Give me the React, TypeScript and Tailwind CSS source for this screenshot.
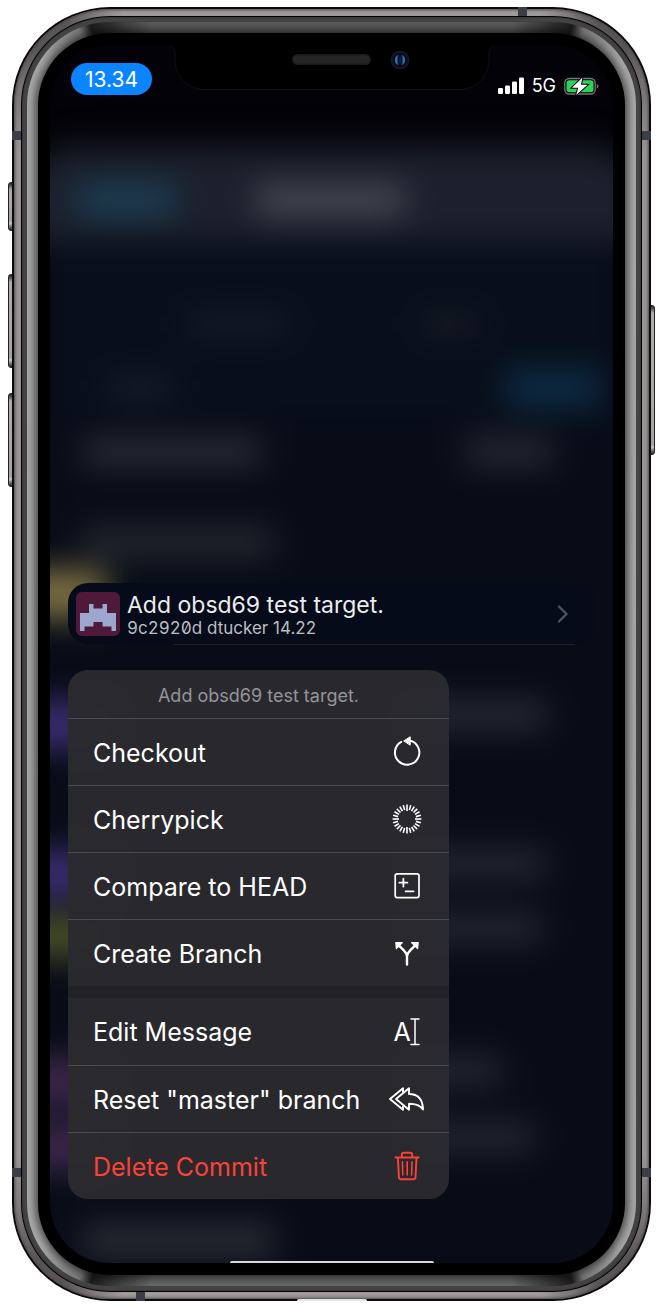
import type { ReactNode } from 'react';

const FONT = "font-['Inter','Liberation_Sans',sans-serif]";

function Icon({ children }: { children: ReactNode }) {
  return (
    <svg
      aria-hidden="true"
      viewBox="0 0 40 40"
      className="size-10 shrink-0"
      fill="none"
      stroke="currentColor"
      strokeWidth="2"
      strokeLinejoin="round"
      strokeLinecap="round"
    >
      {children}
    </svg>
  );
}

function CheckoutIcon() {
  return (
    <Icon>
      <path d="M14.2 9.9A12.2 12.2 0 1 0 22.6 8.6" />
      <path d="M17 8.8 23.2 4.8V12.8Z" fill="currentColor" strokeWidth="1" />
    </Icon>
  );
}

function CherrypickIcon() {
  const ticks = Array.from({ length: 24 }, (_, i) => i);
  return (
    <Icon>
      {ticks.map((i) => (
        <path
          key={i}
          d={i % 6 === 0 ? 'M20 5.6V12' : 'M20 5.6V10.8'}
          strokeWidth="1.6"
          strokeLinecap="butt"
          transform={`rotate(${i * 15} 20 20)`}
        />
      ))}
    </Icon>
  );
}

function CompareIcon() {
  return (
    <Icon>
      <rect x="8.2" y="7.8" width="23.8" height="23.8" rx="2" strokeWidth="1.7" />
      <path d="M12.4 16.7h8M16.4 12.7v8M18.6 25.3h8" strokeWidth="1.8" />
    </Icon>
  );
}

function BranchIcon() {
  return (
    <Icon>
      <path d="M20 31.6V23.5C20 20.5 18.6 19.2 16.6 17.2L10.5 11.2M20 23.5C20 20.5 21.4 19.2 23.4 17.2L29.5 11.2" strokeWidth="2.4" />
      <path d="M8.8 9.6H15.4L9.4 15.6ZM31.2 9.6H24.6L30.6 15.6Z" fill="currentColor" strokeWidth="1.2" />
    </Icon>
  );
}

function RenameIcon() {
  return (
    <Icon>
      <text
        x="6.6"
        y="29"
        fontSize="25"
        fill="currentColor"
        stroke="none"
        className="font-['Inter','Liberation_Sans',sans-serif]"
      >
        A
      </text>
      <path d="M24 7h8M24 32.6h8M28 7v25.6" strokeWidth="1.5" />
    </Icon>
  );
}

function ResetIcon() {
  return (
    <Icon>
      <path d="M9 20 22 9.2V15C30 15 35.8 19.5 36 30.6C33 26 29 24.8 22 24.8V30.8Z" strokeWidth="1.9" />
      <path d="M16 12.5V9.2L3 20 16 30.8V27.5" strokeWidth="1.9" />
    </Icon>
  );
}

function TrashIcon() {
  return (
    <Icon>
      <path d="M8.5 11.5H31.7M14.9 11.2V8.7Q14.9 6.8 16.8 6.8H23.3Q25.2 6.8 25.2 8.7V11.2" strokeWidth="1.9" />
      <path d="M10.9 11.8 11.9 31.3Q12 33.2 13.9 33.2H26.5Q28.4 33.2 28.5 31.3L29.5 11.8" strokeWidth="1.9" />
      <path d="M15.4 15.7 15.8 29M20.2 15.7V29M25 15.7 24.6 29" strokeWidth="1.6" />
    </Icon>
  );
}

type Action = { label: string; icon: ReactNode; danger?: boolean };

const groups: Action[][] = [
  [
    { label: 'Checkout', icon: <CheckoutIcon /> },
    { label: 'Cherrypick', icon: <CherrypickIcon /> },
    { label: 'Compare to HEAD', icon: <CompareIcon /> },
    { label: 'Create Branch', icon: <BranchIcon /> },
  ],
  [
    { label: 'Edit Message', icon: <RenameIcon /> },
    { label: 'Reset "master" branch', icon: <ResetIcon /> },
    { label: 'Delete Commit', icon: <TrashIcon />, danger: true },
  ],
];

function ContextMenu() {
  return (
    <div role="menu" className="w-full max-w-[381px] overflow-hidden rounded-[20px] bg-[#2a2a2e]/97">
      <p className="flex h-12 items-center justify-center pt-[3px] text-[18px] text-[#94949b]">
        Add obsd69 test target.
      </p>
      {groups.map((group, g) => (
        <div key={g} className={g > 0 ? 'border-t-12 border-[#222226]' : ''}>
          {group.map((action, i) => (
            <button
              key={action.label}
              type="button"
              role="menuitem"
              className={`flex h-[67px] w-full items-center justify-between pr-[22px] pl-[25px] text-left text-[25px] ${
                g > 0 && i === 0 ? '' : 'border-t border-[#4a4a50]'
              } ${action.danger ? 'text-[#f8423a]' : 'text-white'}`}
            >
              <span className="pt-[3px]">{action.label}</span>
              {action.icon}
            </button>
          ))}
        </div>
      ))}
    </div>
  );
}

function CommitRow() {
  return (
    <a href="#commit" className="relative flex h-[61px] items-center rounded-[20px] bg-[#050b18] pr-[26px] pl-2">
      <span className="flex size-11 shrink-0 items-center justify-center rounded-md bg-[#4f1a3a]">
        <svg aria-hidden="true" viewBox="0 0 8 6" className="mt-2 h-[27px] w-9" fill="#9ca6cf">
          <path d="M2 0H3V1H5V0H6V2H8V6H7V5H5V4H3V5H1V6H0V2H2Z" />
        </svg>
      </span>
      <span className="ml-[7px] flex grow flex-col pt-1">
        <span className="text-[23px] leading-[26px] text-[#ececee]">Add obsd69 test target.</span>
        <span className="text-[17px] leading-[21px] text-[#bcbec2]">
          <span className="slashed-zero tabular-nums">9c2920d</span> dtucker 14.22
        </span>
      </span>
      <svg aria-hidden="true" viewBox="0 0 12 20" className="h-5 w-3" fill="none" stroke="#50545d" strokeWidth="2.4" strokeLinecap="round" strokeLinejoin="round">
        <path d="M2 2.5 9.5 10 2 17.5" />
      </svg>
      <span className="absolute right-5 -bottom-px left-[105px] h-px bg-[#1b1f26]" />
    </a>
  );
}

function Backdrop() {
  return (
    <div aria-hidden="true" className="absolute inset-0 bg-[#030208]">
      <div className="flex h-full flex-col pt-[100px] blur-[16px]">
        <div className="-mx-8 flex h-[97px] shrink-0 items-center rounded-t-[60px] bg-[#1b202c] px-8 pt-3">
          <span className="ml-6 h-8 w-26 rounded-xl bg-[#1c3f55]" />
          <span className="ml-[76px] h-8 w-38 rounded-xl bg-[#454852]" />
        </div>
        <div className="-mx-8 -mb-8 grow bg-[#070c17] px-8">
          <div className="flex h-[178px] flex-col justify-end bg-[#080e1a]">
            <div className="flex h-16 items-center pl-34">
              <span className="h-6 w-26 bg-[#161d27]" />
              <span className="ml-32 h-6 w-16 bg-[#161b24]" />
            </div>
            <div className="flex h-16 items-center justify-between pr-3 pl-14">
              <span className="h-6 w-17 bg-[#181e28]" />
              <span className="h-10 w-24 bg-[#0c2b44]" />
            </div>
          </div>
          <div className="flex h-16 items-center justify-between pr-15 pl-8">
            <span className="h-7 w-45 bg-[#2b2d37]" />
            <span className="h-7 w-22 bg-[#292a35]" />
          </div>
          <div className="flex h-[74px] items-end pl-8">
            <span className="h-8 w-48 bg-[#22262e]" />
          </div>
          <div className="-ml-8 h-[143px] pt-3">
            <div className="h-12 w-22 bg-[#7d6f40]" />
          </div>
          <div className="-ml-8 flex h-[149px] items-start">
            <span className="h-12 w-24 bg-[#3a2c6e]" />
            <span className="ml-71 h-7 w-37 bg-[#292c36]" />
          </div>
          <div className="-ml-8 flex h-16 items-start">
            <span className="h-12 w-24 bg-[#3a2c6e]" />
            <span className="ml-71 h-7 w-37 bg-[#262933]" />
          </div>
          <div className="-ml-8 flex h-[143px] items-start">
            <span className="h-11 w-24 bg-[#464c26]" />
            <span className="ml-71 h-7 w-36 bg-[#262933]" />
          </div>
          <div className="-ml-8 flex h-[66px] items-start">
            <span className="h-12 w-24 bg-[#3c264a]" />
            <span className="ml-71 h-7 w-26 bg-[#262933]" />
          </div>
          <div className="-ml-8 flex h-[100px] items-start">
            <span className="h-12 w-24 bg-[#3c264a]" />
            <span className="ml-71 h-7 w-34 bg-[#262933]" />
          </div>
          <div className="ml-8 h-9 w-48 bg-[#272a32]" />
        </div>
      </div>
    </div>
  );
}

function Notch() {
  return (
    <svg aria-hidden="true" viewBox="0 0 330 45" className="h-[45px] w-[330px] shrink-0">
      <path
        d="M0 -1C6 0 8 4 8 10V13C8 32 20 44.5 38 44.5H292C310 44.5 322 32 322 13V10C322 4 324 0 330 -1Z"
        fill="#000"
        stroke="#1d1d20"
        strokeWidth="0.6"
      />
      <rect x="125" y="9" width="79" height="11" rx="5.5" fill="#1b1b1c" />
      <rect x="126.5" y="10.5" width="76" height="8" rx="4" fill="#252526" />
      <circle cx="233" cy="15" r="9.5" fill="#14161a" />
      <circle cx="233" cy="15" r="7" fill="#060a16" />
      <path d="M231 10A5.5 5.5 0 0 0 231 20Z" fill="#2d6cb0" />
      <path d="M235 10A5.5 5.5 0 0 1 235 20Z" fill="#2d6cb0" />
      <rect x="230.5" y="10" width="5" height="10" rx="2.5" fill="#0b1738" />
    </svg>
  );
}

function StatusBar() {
  return (
    <div className="grid h-[51px] grid-cols-[1fr_330px_1fr] items-start text-white">
      <span className="flex pt-[18px] pl-[21px]">
        <span className="flex h-8 w-[81px] items-center justify-center rounded-full bg-[#0a84ff] pt-px text-[21px]">
          13.34
        </span>
      </span>
      <Notch />
      <span className="flex items-center justify-end gap-2 pt-[30px] pr-[14px]">
        <svg aria-label="Signal" viewBox="0 0 26 17" className="h-[17px] w-[26px] shrink-0" fill="#fff">
          <rect x="0" y="11" width="5" height="6" rx="1.2" />
          <rect x="7" y="8.5" width="5" height="8.5" rx="1.2" />
          <rect x="14" y="4.5" width="5" height="12.5" rx="1.2" />
          <rect x="21" y="0.5" width="5" height="16.5" rx="1.2" />
        </svg>
        <span className="pt-px text-[18px] leading-5">5G</span>
        <svg aria-label="Battery charging" viewBox="0 0 35 20" className="h-5 w-[35px] shrink-0">
          <rect x="0.8" y="2.5" width="30.4" height="15.5" rx="4.5" fill="none" stroke="#77777c" strokeWidth="1.3" />
          <path d="M32.8 8V12.5Q34.4 12 34.4 10.2T32.8 8Z" fill="#77777c" />
          <rect x="2.5" y="4.2" width="27" height="12.1" rx="2.8" fill="#30d158" />
          <path d="M18.5 1.5 8 11.8H14.3L12.2 18.9 23.5 8.8H16.9Z" fill="#fff" stroke="#06040c" strokeWidth="2" paintOrder="stroke" />
        </svg>
      </span>
    </div>
  );
}

function SideButton({ className }: { className: string }) {
  return (
    <span
      aria-hidden="true"
      className={`absolute w-[7px] border border-[#222] bg-[linear-gradient(#222,#b0adad_7px,#a5a2a2_calc(100%-9px),#ccc_calc(100%-7px),#222)] ${className}`}
    />
  );
}

function Band({ className }: { className: string }) {
  return <span aria-hidden="true" className={`absolute bg-[#3b3f45] ${className}`} />;
}

export default function App() {
  return (
    <main className={`min-h-screen bg-white px-3 py-[7px] antialiased ${FONT}`}>
      <div className="relative">
        <SideButton className="top-[175px] -left-[4px] h-[49px] rounded-l-[3px]" />
        <SideButton className="top-[267px] -left-[4px] h-[94px] rounded-l-[3px]" />
        <SideButton className="top-[386px] -left-[4px] h-[94px] rounded-l-[3px]" />
        <SideButton className="top-[298px] -right-[4px] h-[150px] rounded-r-[3px]" />

        <div className="relative rounded-[98px] bg-[#0c0a0c] p-[2px]">
          <div className="rounded-[96px] bg-[conic-gradient(#a09b9b,#a09b9b_18deg,#5a5656_23deg,#5a5656_26deg,#9a9595_32deg,#9a9595_148deg,#5a5656_154deg,#5a5656_157deg,#a09b9b_162deg,#a09b9b_198deg,#5a5656_203deg,#5a5656_206deg,#9a9595_212deg,#9a9595_328deg,#5a5656_334deg,#5a5656_337deg,#a09b9b_342deg)] p-[7px] shadow-[inset_0_0_3px_1px_#4a4747]">
            <div className="rounded-[89px] bg-black p-px">
              <div className="rounded-[88px] bg-[#444] p-[5px] shadow-[inset_0_0_2px_#222]">
                <div className="rounded-[83px] bg-[conic-gradient(#5c5c5c,#5c5c5c_16deg,#1c1c1c_21deg,#777_22deg,#aaa_26deg,#a8a8a8_154deg,#777_158deg,#1c1c1c_159deg,#666_164deg,#666_196deg,#1c1c1c_201deg,#777_202deg,#aaa_206deg,#a8a8a8_334deg,#777_338deg,#1c1c1c_339deg,#5c5c5c_344deg)] p-[11px]">
                  <div className="rounded-[72px] bg-black p-3 shadow-[0_0_9px_3px_rgba(0,0,0,0.6)]">
                    <div className="relative isolate overflow-hidden rounded-[60px]">
                      <Backdrop />
                      <div className="relative flex flex-col">
                        <StatusBar />
                        <div className="flex flex-col gap-[26px] px-[18px] pt-[487px] pb-16">
                          <CommitRow />
                          <ContextMenu />
                        </div>
                      </div>
                      <span className="absolute bottom-0 left-1/2 h-[2px] w-[204px] -translate-x-1/2 rounded-t-full bg-[#d8d8d8]" />
                    </div>
                  </div>
                </div>
              </div>
            </div>
          </div>
          <Band className="top-[124px] left-0 h-[9px] w-[9px]" />
          <Band className="top-[124px] right-0 h-[9px] w-[9px]" />
          <Band className="bottom-[124px] left-0 h-[9px] w-[9px]" />
          <Band className="right-0 bottom-[124px] h-[9px] w-[9px]" />
          <Band className="top-0 right-[124px] h-[9px] w-[9px]" />
          <Band className="bottom-0 left-[124px] h-[9px] w-[9px]" />
          <span className="absolute bottom-0 left-1/2 h-[2px] w-[70px] -translate-x-1/2 rounded-t-full bg-[#e4e4e4]" />
        </div>
      </div>
    </main>
  );
}
